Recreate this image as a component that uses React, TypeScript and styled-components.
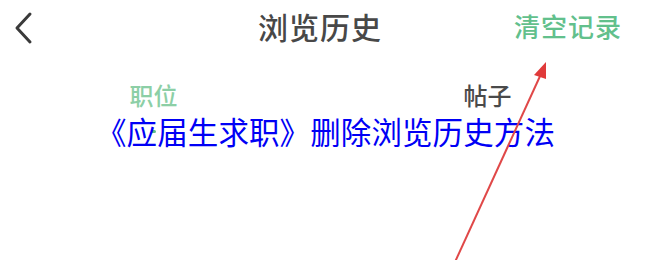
import React from "react"
import styled, { createGlobalStyle } from "styled-components"

const Global = createGlobalStyle`
  html, body {
    margin: 0;
    padding: 0;
    background: #fff;
  }
  body {
    font-family: "Noto Sans CJK SC", "Noto Sans", sans-serif;
  }
`

const Screen = styled.div`
  position: relative;
  width: 650px;
  height: 260px;
  overflow: hidden;
  background: #fff;
`

const Header = styled.div`
  display: grid;
  grid-template-columns: 1fr auto 1fr;
  align-items: center;
  height: 52px;
  padding: 0 28px 0 12px;
`

const Back = styled.button`
  justify-self: start;
  display: flex;
  align-items: center;
  background: none;
  border: none;
  padding: 0;
  margin-top: 3px;
  color: #3a3a3a;
`

const Title = styled.div`
  font-size: 30px;
  font-weight: 500;
  color: #484848;
  letter-spacing: 1px;
  margin-left: 6px;
`

const Action = styled.div`
  justify-self: end;
  font-size: 26px;
  font-weight: 500;
  color: #62c08c;
  letter-spacing: 1px;
  margin-top: -2px;
`

const Tabs = styled.div`
  display: grid;
  grid-template-columns: 1fr 1fr;
  padding-top: 28px;
`

const Tab = styled.div<{ active?: boolean; shift?: number }>`
  display: flex;
  flex-direction: column;
  align-items: center;
  gap: 20px;
  font-size: 24px;
  font-weight: 500;
  line-height: 30px;
  color: ${(p) => (p.active ? "#8ccfa6" : "#4a4a4a")};
  margin-left: ${(p) => p.shift || 0}px;
`

const Dot = styled.span`
  width: 5px;
  height: 3px;
  border-radius: 2px;
  background: #5cbf88;
`

const Caption = styled.div`
  position: absolute;
  left: 96px;
  top: 111px;
  font-size: 30.5px;
  letter-spacing: 0.1px;
  line-height: 40px;
  color: #0000f5;
  white-space: nowrap;
`

const Arrow = styled.svg`
  position: absolute;
  left: 0;
  top: 0;
  pointer-events: none;
`

const App = () => (
  <Screen>
    <Global />
    <Header>
      <Back>
        <svg width="24" height="34" viewBox="0 0 24 34">
          <path
            d="M18 3 L5 17 L18 31"
            fill="none"
            stroke="currentColor"
            strokeWidth="3"
            strokeLinecap="round"
            strokeLinejoin="round"
          />
        </svg>
      </Back>
      <Title>浏览历史</Title>
      <Action>清空记录</Action>
    </Header>
    <Tabs>
      <Tab active shift={-18}>
        职位
        <Dot />
      </Tab>
      <Tab>帖子</Tab>
    </Tabs>
    <Caption>《应届生求职》删除浏览历史方法</Caption>
    <Arrow width="650" height="260" viewBox="0 0 650 260">
      <line x1="455" y1="262" x2="541" y2="74" stroke="#e04848" strokeWidth="2" />
      <polygon points="546,62 534,75 546,79" fill="#e03a3a" />
    </Arrow>
  </Screen>
)

export default App
